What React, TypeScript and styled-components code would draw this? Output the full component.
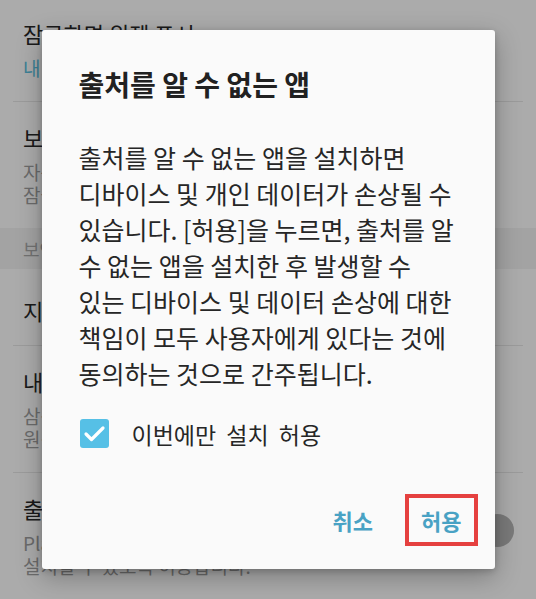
import React, { useState } from "react";
import styled, { createGlobalStyle } from "styled-components";

const GlobalStyle = createGlobalStyle`
	html, body {
		margin: 0;
		padding: 0;
		background: #ffffff;
		font-family: "Noto Sans CJK KR", "Noto Sans", sans-serif;
	}
	* {
		box-sizing: border-box;
	}
`;

const Screen = styled.div`
	position: relative;
	width: 536px;
	height: 599px;
	overflow: hidden;
	background: #ffffff;
`;

const List = styled.div`
	display: flex;
	flex-direction: column;
	margin-top: -2px;
`;

const Item = styled.div<{ $single?: boolean }>`
	display: flex;
	align-items: flex-start;
	gap: 12px;
	padding: ${(p) => (p.$single ? "27px 22px 21px 23px" : "21px 22px 22px 23px")};
`;

const ItemText = styled.div`
	flex: 1;
	min-width: 0;
	display: flex;
	flex-direction: column;
`;

const ItemTitle = styled.div`
	font-size: 22px;
	line-height: 28px;
	color: #282828;
	white-space: nowrap;
`;

const ItemSub = styled.div<{ $accent?: boolean }>`
	font-size: 19px;
	line-height: 23px;
	color: ${(p) => (p.$accent ? "#5bbfe0" : "#a0a0a0")};
	white-space: nowrap;

	${ItemTitle} + & {
		margin-top: 9px;
	}
`;

const Divider = styled.div`
	height: 1px;
	margin: 0 13px;
	background: #e8e8e8;
`;

const SectionHeader = styled.div`
	height: 41px;
	display: flex;
	align-items: center;
	padding: 0 23px;
	background: #f4f4f4;
	font-size: 18px;
	color: #aaaaaa;
`;

const Toggle = styled.div`
	margin-top: 24px;
	display: flex;
	align-items: center;
	justify-content: flex-end;
	width: 56px;
	height: 24px;
	border-radius: 12px;
	background: #e2e2e2;
`;

const Thumb = styled.div`
	flex-shrink: 0;
	width: 33px;
	height: 33px;
	border-radius: 50%;
	background: #b6b6b6;
`;

const Scrim = styled.div`
	position: absolute;
	inset: 0;
	display: flex;
	align-items: center;
	justify-content: center;
	background: rgba(0, 0, 0, 0.33);
`;

const Dialog = styled.div`
	width: 453px;
	display: flex;
	flex-direction: column;
	padding: 38px 17px 23px 37px;
	background: #fafafa;
	border-radius: 3px;
	box-shadow: 0 8px 26px rgba(0, 0, 0, 0.28), 0 2px 6px rgba(0, 0, 0, 0.18);
`;

const Title = styled.h2`
	margin: 0;
	font-size: 28px;
	line-height: 32px;
	font-weight: 700;
	color: #212121;
`;

const Message = styled.p`
	margin: 39px 0 0;
	font-size: 25px;
	line-height: 36px;
	color: #262626;
	white-space: nowrap;
`;

const CheckRow = styled.label`
	margin-top: 28px;
	display: flex;
	align-items: center;
	gap: 23px;
	height: 29px;
	padding-left: 1px;
	cursor: pointer;
	font-size: 23px;
	word-spacing: 5px;
	color: #262626;
	white-space: nowrap;
`;

const Actions = styled.div`
	margin-top: 46px;
	display: flex;
	justify-content: flex-end;
	align-items: center;
	gap: 20px;
`;

const Highlight = styled.div`
	border: 4px solid #e5403f;
`;

const TextButton = styled.button`
	height: 44px;
	padding: 0 12px;
	border: none;
	background: transparent;
	font-family: inherit;
	font-size: 22px;
	font-weight: 700;
	color: #49a2c4;
	cursor: pointer;
`;

function CheckBox({ checked }: { checked: boolean }) {
	return (
		<svg width="29" height="29" viewBox="0 0 29 29">
			<rect x="0" y="0" width="29" height="29" rx="3" fill={checked ? "#56c0e6" : "#ffffff"} stroke={checked ? "none" : "#888"} />
			{checked && <path d="M6 15 L11.5 20.5 L23 9" fill="none" stroke="#ffffff" strokeWidth="3.2" strokeLinecap="round" strokeLinejoin="round" />}
		</svg>
	);
}

export default function App() {
	const [once, setOnce] = useState(true);

	return (
		<Screen>
			<GlobalStyle />
			<List>
				<Item>
					<ItemText>
						<ItemTitle>잠금화면 위젯 표시</ItemTitle>
						<ItemSub $accent>내 정보 및 날씨</ItemSub>
					</ItemText>
				</Item>
				<Divider />
				<Item>
					<ItemText>
						<ItemTitle>보안 잠금 설정</ItemTitle>
						<ItemSub>자동 잠금, 전원 버튼으로 바로 잠금 등</ItemSub>
						<ItemSub>잠금 설정을 변경합니다.</ItemSub>
					</ItemText>
				</Item>
				<SectionHeader>보안</SectionHeader>
				<Item $single>
					<ItemText>
						<ItemTitle>지문</ItemTitle>
					</ItemText>
				</Item>
				<Divider />
				<Item>
					<ItemText>
						<ItemTitle>내 디바이스 찾기</ItemTitle>
						<ItemSub>삼성 계정으로 디바이스를 찾고</ItemSub>
						<ItemSub>원격으로 관리할 수 있습니다.</ItemSub>
					</ItemText>
				</Item>
				<Divider />
				<Item>
					<ItemText>
						<ItemTitle>출처를 알 수 없는 앱</ItemTitle>
						<ItemSub>Play 스토어 이외의 출처에서 받은 앱을</ItemSub>
						<ItemSub>설치할 수 있도록 허용합니다.</ItemSub>
					</ItemText>
					<Toggle>
						<Thumb />
					</Toggle>
				</Item>
			</List>

			<Scrim>
				<Dialog>
					<Title>출처를 알 수 없는 앱</Title>
					<Message>
						출처를 알 수 없는 앱을 설치하면
						<br />
						디바이스 및 개인 데이터가 손상될 수
						<br />
						있습니다. [허용]을 누르면, 출처를 알
						<br />
						수 없는 앱을 설치한 후 발생할 수
						<br />
						있는 디바이스 및 데이터 손상에 대한
						<br />
						책임이 모두 사용자에게 있다는 것에
						<br />
						동의하는 것으로 간주됩니다.
					</Message>
					<CheckRow onClick={() => setOnce(!once)}>
						<CheckBox checked={once} />
						<span>이번에만 설치 허용</span>
					</CheckRow>
					<Actions>
						<TextButton>취소</TextButton>
						<Highlight>
							<TextButton>허용</TextButton>
						</Highlight>
					</Actions>
				</Dialog>
			</Scrim>
		</Screen>
	);
}
